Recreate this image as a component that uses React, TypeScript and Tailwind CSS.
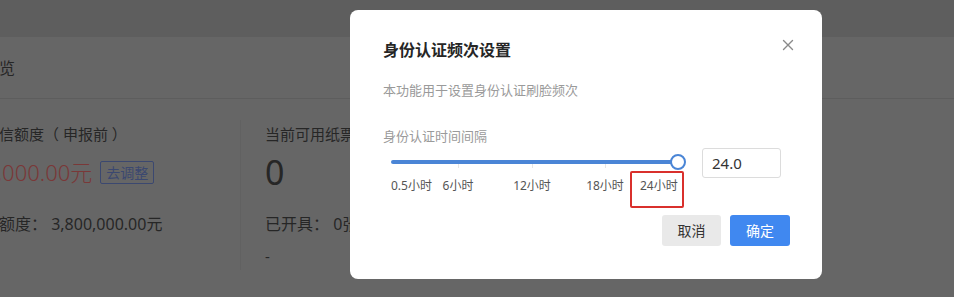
const marks = [
  { label: '0.5小时', pos: 'left-0' },
  { label: '6小时', pos: 'left-[67px] -translate-x-1/2' },
  { label: '12小时', pos: 'left-[141px] -translate-x-1/2' },
  { label: '18小时', pos: 'left-[214px] -translate-x-1/2' },
  { label: '24小时', pos: 'left-[249px]' },
]

const ticks = ['left-[67px]', 'left-[141px]', 'left-[214px]']

export default function App() {
  return (
    <div
      className="relative w-[954px] h-[297px] overflow-hidden bg-[#666666]"
      style={{ fontFamily: '"Noto Sans", "Noto Sans CJK SC", sans-serif' }}
    >
      {/* Page behind the mask */}
      <div className="h-[37px] bg-[#5e5e5e]" />
      <div className="h-[62px] flex items-center border-b border-[#5d5d5d] text-[16px] text-[#262626]">
        <span className="-ml-[1px]">览</span>
      </div>

      <div className="flex mt-[21px] text-[#262626]">
        {/* Credit column */}
        <div className="w-[257px] -ml-[16px] h-[150px] border-r border-[#616161] whitespace-nowrap">
          <div className="h-[28px] pt-[4px] text-[15px] leading-[20px]">授信额度（ 申报前 ）</div>
          <div className="h-[44px] flex items-center gap-[8px] mt-[2px]">
            <span className="text-[22px] font-light text-[#7a3838] -ml-[12px]">10,000.00元</span>
            <span className="h-[23px] px-[5px] border border-[#3b4870] rounded-[2px] text-[14px] leading-[21px] text-[#3b4870]">
              去调整
            </span>
          </div>
          <div className="h-[40px] flex items-end text-[16px] leading-[20px] -ml-[1px]">
            总额度： 3,800,000.00元
          </div>
        </div>

        {/* Paper invoice column */}
        <div className="pl-[24px] h-[150px] whitespace-nowrap">
          <div className="h-[28px] pt-[4px] text-[15px] leading-[20px]">当前可用纸票</div>
          <div className="h-[44px] flex items-center mt-[2px] text-[34px] leading-none">0</div>
          <div className="h-[40px] flex items-end text-[16px] leading-[20px]">已开具： 0张</div>
          <div className="mt-[12px] text-[15px] leading-[20px]">-</div>
        </div>
      </div>

      {/* Dialog */}
      <div className="absolute left-[350px] top-[10px] w-[472px] h-[269px] bg-white rounded-[8px] pl-[33px] pr-[32px] pt-[30px]">
        <div className="flex items-center justify-between h-[20px]">
          <h2 className="text-[16px] font-bold text-[#262626] leading-[20px]">身份认证频次设置</h2>
          <svg width="12" height="12" viewBox="0 0 12 12" className="-mt-[10px] -mr-[4px]">
            <path d="M1.5 1.5 10.5 10.5 M10.5 1.5 1.5 10.5" stroke="#8a8a8a" strokeWidth="1.4" strokeLinecap="round" />
          </svg>
        </div>

        <p className="mt-[21px] text-[13px] leading-[18px] text-[#9a9a9a]">本功能用于设置身份认证刷脸频次</p>
        <p className="mt-[28px] text-[13px] leading-[18px] text-[#9a9a9a]">身份认证时间间隔</p>

        <div className="flex mt-[3px]">
          {/* Slider */}
          <div className="relative ml-[8px] w-[294px] h-[52px]">
            <div className="absolute left-0 top-[12px] w-[287px] h-[4px] rounded-full bg-[#4a85d6]" />
            {ticks.map((t) => (
              <div key={t} className={`absolute top-[16px] w-px h-[4px] bg-[#e6e6e6] ${t}`} />
            ))}
            <div className="absolute left-[279px] top-[6px] w-[16px] h-[16px] rounded-full bg-white border-2 border-[#4a85d6]" />
            {marks.map((m) => (
              <span
                key={m.label}
                className={`absolute top-[30px] text-[12px] leading-[16px] text-[#555555] whitespace-nowrap ${m.pos}`}
              >
                {m.label}
              </span>
            ))}
            <div className="absolute left-[239px] top-[23px] w-[54px] h-[37px] border-2 border-[#d9302c] rounded-[2px]" />
          </div>

          <div className="ml-[17px] w-[79px] h-[30px] border border-[#dcdcdc] rounded-[3px] pl-[9px] flex items-center text-[15px] text-[#333333]">
            24.0
          </div>
        </div>

        <div className="flex justify-end gap-[9px] mt-[15px]">
          <button className="w-[59px] h-[31px] rounded-[3px] bg-[#e9e9e9] text-[14px] text-[#333333]">取消</button>
          <button className="w-[60px] h-[31px] rounded-[3px] bg-[#4088f0] text-[14px] text-white">确定</button>
        </div>
      </div>
    </div>
  )
}
